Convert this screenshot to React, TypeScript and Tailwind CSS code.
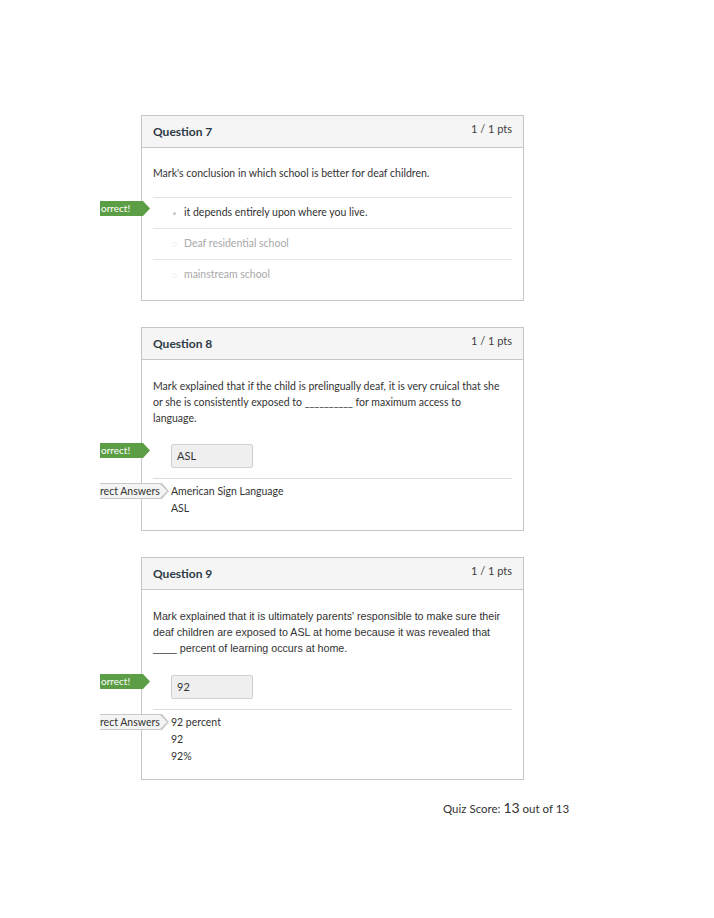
import { FC, ReactNode } from "react";

const lato = "font-['Lato','Liberation_Sans',sans-serif]";
const arial = "font-['Liberation_Sans',Arial,sans-serif]";

const CorrectTag: FC<{ top: number; left?: number }> = ({ top, left = -53 }) => (
  <div
    className={`absolute w-[50px] h-[15px] bg-[#5c9e45] text-white text-[10px] leading-[15px] pl-[1px] [clip-path:polygon(0_0,calc(100%-7px)_0,100%_50%,calc(100%-7px)_100%,0_100%)] ${lato}`}
    style={{ top, left }}
  >
    orrect!
  </div>
);

const AnswersTag: FC<{ top: number }> = ({ top }) => (
  <div
    className="absolute left-[-53px] w-[69px] h-[16px] bg-[#c9c9c9] [clip-path:polygon(0_0,calc(100%-7px)_0,100%_50%,calc(100%-7px)_100%,0_100%)]"
    style={{ top }}
  >
    <div
      className={`h-[14px] w-[67px] mt-[1px] bg-[#f4f4f4] text-[#333] text-[10.5px] leading-[14px] [clip-path:polygon(0_0,calc(100%-7px)_0,100%_50%,calc(100%-7px)_100%,0_100%)] ${lato}`}
    >
      rect Answers
    </div>
  </div>
);

interface CardProps {
  title: string;
  children: ReactNode;
}

const Card: FC<CardProps> = ({ title, children }) => (
  <div className="ml-[41px] w-[383px] border border-[#c6c6c6] bg-white">
    <div className={`h-[32px] flex justify-between bg-[#f5f5f5] border-b border-[#c6c6c6] px-[11px] ${lato}`}>
      <span className="text-[12px] font-bold text-[#2d3b45] leading-[32px]">{title}</span>
      <span className="text-[11px] text-[#3d3d3d] leading-[26px]">1 / 1 pts</span>
    </div>
    <div className="px-[11px]">{children}</div>
  </div>
);

const InputBox: FC<{ value: string }> = ({ value }) => (
  <div className="relative ml-[18px] w-[82px] h-[24px] bg-[#efefef] border border-[#d0d0d0] rounded-[2px] px-[5px] text-[11px] leading-[22px] text-[#333]">
    <CorrectTag top={-2} left={-72} />
    {value}
  </div>
);

export default function App() {
  return (
    <div className="min-h-[918px] w-[714px] bg-white pl-[100px] pt-[115px]">
      <div className="w-[424px] overflow-hidden flex flex-col gap-[26px]">
        <Card title="Question 7">
          <p className={`pt-[17px] text-[10.5px] leading-[16px] text-[#333] ${lato}`}>
            Mark's conclusion in which school is better for deaf children.
          </p>
          <div className={`mt-[16px] pb-[10px] text-[10.5px] ${lato}`}>
            <div className="relative h-[31px] flex items-center border-t border-[#e2e2e2]">
              <CorrectTag top={3} />
              <span className="ml-[20px] w-[3px] h-[3px] rounded-full bg-[#c4c4c4]" />
              <span className="ml-[8px] text-[#333]">it depends entirely upon where you live.</span>
            </div>
            <div className="h-[31px] flex items-center border-t border-[#e6e6e6]">
              <span className="ml-[19px] w-[5px] h-[5px] rounded-full border border-[#f0f0f0]" />
              <span className="ml-[7px] text-[#a9a9a9]">Deaf residential school</span>
            </div>
            <div className="h-[31px] flex items-center border-t border-[#e6e6e6]">
              <span className="ml-[19px] w-[5px] h-[5px] rounded-full border border-[#f0f0f0]" />
              <span className="ml-[7px] text-[#a9a9a9]">mainstream school</span>
            </div>
          </div>
        </Card>

        <Card title="Question 8">
          <p className={`pt-[18px] pr-[8px] text-[10.5px] leading-[16px] text-[#333] ${lato}`}>
            Mark explained that if the child is prelingually deaf, it is very cruical that she or she is
            consistently exposed to __________ for maximum access to language.
          </p>
          <div className={`mt-[18px] ${lato}`}>
            <InputBox value="ASL" />
          </div>
          <div className={`relative mt-[10px] border-t border-[#dcdcdc] pt-[4px] pb-[13px] pl-[18px] text-[10.5px] leading-[17px] text-[#333] ${lato}`}>
            <AnswersTag top={4} />
            <div>American Sign Language</div>
            <div>ASL</div>
          </div>
        </Card>

        <Card title="Question 9">
          <p className={`pt-[18px] text-[10.7px] leading-[16px] text-[#333] ${arial}`}>
            Mark explained that it is ultimately parents' responsible to make sure their deaf children
            are exposed to ASL at home because it was revealed that ____ percent of learning occurs at
            home.
          </p>
          <div className={`mt-[19px] ${lato}`}>
            <InputBox value="92" />
          </div>
          <div className={`relative mt-[10px] border-t border-[#dcdcdc] pt-[4px] pb-[14px] pl-[18px] text-[10.5px] leading-[17px] text-[#333] ${lato}`}>
            <AnswersTag top={4} />
            <div>92 percent</div>
            <div>92</div>
            <div>92%</div>
          </div>
        </Card>
      </div>
      <div className={`mt-[17px] ml-[343px] text-[11.5px] text-[#333] ${lato}`}>
        Quiz Score: <span className="text-[14px]">13</span> out of 13
      </div>
    </div>
  );
}
